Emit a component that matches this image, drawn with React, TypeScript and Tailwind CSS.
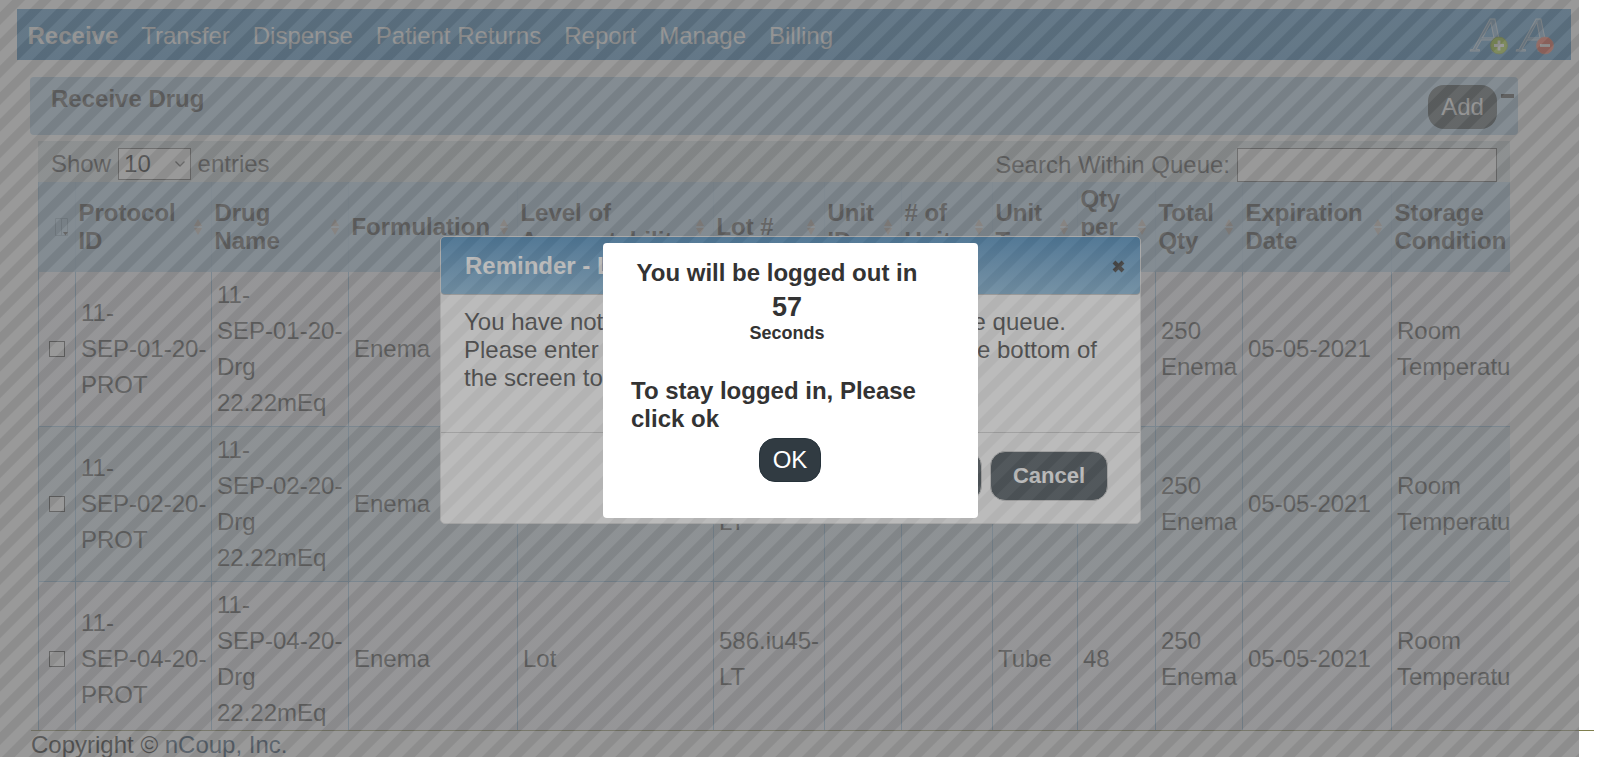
import React from "react";

const MENU = ["Transfer", "Dispense", "Patient Returns", "Report", "Manage", "Billing"];

const COLS =
  "grid grid-cols-[37px_136px_137px_169px_196px_111px_77px_91px_85px_78px_87px_149px_119px]";

const HEADERS = [
  ["Protocol", "ID"],
  ["Drug", "Name"],
  ["Formulation"],
  ["Level of", "Accountability"],
  ["Lot #"],
  ["Unit", "ID"],
  ["# of", "Units"],
  ["Unit", "Type"],
  ["Qty", "per", "Unit"],
  ["Total", "Qty"],
  ["Expiration", "Date"],
  ["Storage", "Condition"],
];

const ROWS = ["01", "02", "04"].map((n) => [
  ["11-", `SEP-${n}-20-`, "PROT"],
  ["11-", `SEP-${n}-20-`, "Drg", "22.22mEq"],
  ["Enema"],
  ["Lot"],
  ["586.iu45-", "LT"],
  [],
  [],
  ["Tube"],
  ["48"],
  ["250", "Enema"],
  ["05-05-2021"],
  ["Room", "Temperature"],
]);

function Stripes({ layer }: { layer: string }) {
  return (
    <div
      className={`absolute left-0 top-0 h-[757px] w-[1579px] bg-[repeating-linear-gradient(135deg,#777_0px,#777_8.2px,#676767_9.2px,#676767_17.2px,#777_18.2px,#777_18.856px)] opacity-50 ${layer}`}
    />
  );
}

function FontSizeIcon({ plus }: { plus: boolean }) {
  return (
    <svg width="46" height="44" viewBox="0 0 46 44">
      <text
        x="5"
        y="38"
        fontFamily="Liberation Serif, serif"
        fontStyle="italic"
        fontSize="48"
        textLength="31"
        lengthAdjust="spacingAndGlyphs"
        fill="#6096c0"
        stroke="#b4cbdd"
        strokeWidth="0.9"
      >
        A
      </text>
      <circle cx="31" cy="32.5" r="8.4" fill={plus ? "#97c814" : "#ee4a30"} stroke={plus ? "#6d9a1a" : "#d06050"} />
      <path d={plus ? "M26 32.5H36M31 27.5V37.5" : "M26 32.5H36"} stroke="#fff" strokeWidth="2.8" />
    </svg>
  );
}

function SortIcon() {
  return (
    <svg className="shrink-0" width="8" height="16" viewBox="0 0 8 16">
      <path d="M4 0L8 7H0Z" fill="#b5a8a0" />
      <path d="M4 16L0 9H8Z" fill="#b5a8a0" />
      <path d="M0 8H8" stroke="#d9dee2" />
    </svg>
  );
}

export default function App() {
  return (
    <div className="relative h-[757px] w-[1600px] overflow-hidden bg-white font-['Liberation_Sans',Arial,sans-serif] text-[24px] leading-[28px] text-[#333]">
      <div className="flex h-[730px] flex-col overflow-hidden pt-[9px]">
        <nav className="ml-[17px] flex h-[51px] w-[1554px] shrink-0 items-center justify-between bg-gradient-to-b from-[#2f7fbc] to-[#2a7ab8] pl-[10.5px] text-[#eee]">
          <div className="flex gap-[23px] pt-[3px]">
            <span className="font-bold">Receive</span>
            {MENU.map((m) => (
              <span key={m}>{m}</span>
            ))}
          </div>
          <div className="flex pr-[11px] pt-[1px]">
            <FontSizeIcon plus />
            <FontSizeIcon plus={false} />
          </div>
        </nav>

        <header className="ml-[30px] mt-[17px] flex h-[58px] w-[1488px] shrink-0 items-start rounded-[4px] bg-[#a8cbe6] pl-[21px] pt-[8px]">
          <h1 className="grow font-bold leading-[28px]">Receive Drug</h1>
          <button className="h-[44px] w-[69px] rounded-[16px] bg-[#2c3a3e] text-[#eee]">Add</button>
          <span className="ml-[4px] mr-[4px] mt-[9px] h-[4px] w-[13px] bg-[#222]" />
        </header>

        <main className="ml-[38px] mt-[6px] w-[1472px] shrink-0">
          <div className="flex h-[41px] items-start bg-[#d0dce2] pl-[13px] pr-[13px] pt-[7px]">
            <span className="pt-[2px]">Show</span>
            <div className="ml-[7px] flex h-[32px] w-[73px] items-center justify-between border border-[#555] bg-white pl-[5px] pr-[5px] text-black">
              <span>10</span>
              <svg width="10" height="6" viewBox="0 0 10 6" fill="none" stroke="#444" strokeWidth="1.3">
                <path d="M0.5 0.5L5 5L9.5 0.5" />
              </svg>
            </div>
            <span className="ml-[6.5px] grow pt-[2px]">entries</span>
            <span className="pt-[3px]">Search Within Queue:</span>
            <div className="ml-[7px] h-[34px] w-[260px] border border-[#555] bg-white" />
          </div>

          <div className="overflow-hidden">
            <div className={`${COLS} h-[90px] bg-[#a8cbe6] font-bold`}>
              <div className="flex items-center border-l border-[#8db8d8] pl-[15px]">
                <svg width="16" height="20" viewBox="0 0 16 20" fill="none" stroke="#7d9cb5">
                  <path d="M1.5 1.5H13.5V18.5H1.5ZM7.5 1.5V18.5" />
                  <path d="M9 15H14L11.5 18.5Z" fill="#333" stroke="none" />
                </svg>
              </div>
              {HEADERS.map((lines, i) => (
                <div key={i} className="flex items-center justify-between border-l border-[#9dc3e0] pl-[2.4px] pr-[9px] last:pr-0">
                  <div className="w-0 whitespace-nowrap">
                    {lines.map((l) => (
                      <div key={l}>{l}</div>
                    ))}
                  </div>
                  {i < 11 && <SortIcon />}
                </div>
              ))}
            </div>
            {ROWS.map((row, r) => (
              <div
                key={r}
                className={`${COLS} h-[155px] border-b border-[#86b6d8] leading-[36px] ${r % 2 ? "bg-[#d2e2ec]" : "bg-[#f0f2f8]"}`}
              >
                <div className="flex items-center border-l border-[#86b6d8] pl-[10px]">
                  <span className="h-[16px] w-[16px] border border-[#333] bg-white" />
                </div>
                {row.map((lines, i) => (
                  <div key={i} className="flex items-center border-l border-[#86b6d8] pl-[5px]">
                    <div className="whitespace-nowrap">
                      {lines.map((l, k) => (
                        <div key={k}>{l}</div>
                      ))}
                    </div>
                  </div>
                ))}
              </div>
            ))}
          </div>
        </main>
      </div>
      <footer className="ml-[31px] w-[1563px] border-t border-[#80804f] text-black">
        Copyright © <span className="text-[#0b2f52]">nCoup, Inc.</span>
      </footer>

      <Stripes layer="z-10" />

      <section className="absolute left-[440px] top-[236px] z-20 flex h-[288px] w-[701px] flex-col rounded-[5px] border border-[#ddd] bg-white">
        <div className="flex h-[58px] items-center justify-between rounded-[4px] border-b border-[#bbb] bg-gradient-to-b from-[#2f7bb5] to-[#73acd3] pl-[24px] pr-[15px] font-bold text-white">
          <h2>Reminder - Log</h2>
          <svg className="mt-[2px]" width="13" height="13" viewBox="0 0 13 13" stroke="#222" strokeWidth="4">
            <path d="M2 2L11 11M11 2L2 11" />
          </svg>
        </div>
        <p className="h-[138px] whitespace-nowrap border-b border-[#ccc] pl-[23px] pt-[13px]">
          <span className="flex justify-between pr-[74px]"><span>You have not</span><span>the queue.</span></span>
          <span className="flex justify-between pr-[43px]"><span>Please enter</span><span>the bottom of</span></span>
          <span className="block">the screen to</span>
        </p>
        <div className="flex justify-end gap-[8px] pr-[32px] pt-[18px] text-[22px] font-bold text-white">
          <button className="h-[50px] w-[100px] rounded-[15px] border border-[#ccc] bg-[#2e3a42]">Save</button>
          <button className="h-[50px] w-[118px] rounded-[15px] border border-[#ccc] bg-[#2e3a42]">Cancel</button>
        </div>
      </section>

      <Stripes layer="z-30" />

      <section className="absolute left-[603px] top-[243px] z-40 flex h-[275px] w-[375px] flex-col rounded-[4px] bg-white font-bold">
        <p className="pl-[33.5px] pt-[16px]">You will be logged out in</p>
        <p className="pr-[7px] pt-[5px] text-center text-[27px] leading-[31px]">57</p>
        <p className="pr-[7px] text-center text-[18px] leading-[21px]">Seconds</p>
        <p className="pl-[28px] pt-[33px] leading-[28px]">
          To stay logged in, Please
          <br />
          click ok
        </p>
        <button className="ml-[156px] mt-[5px] h-[44px] w-[62px] rounded-[16px] border border-[#26323a] bg-[#313b42] font-normal text-white">
          OK
        </button>
      </section>
    </div>
  );
}
